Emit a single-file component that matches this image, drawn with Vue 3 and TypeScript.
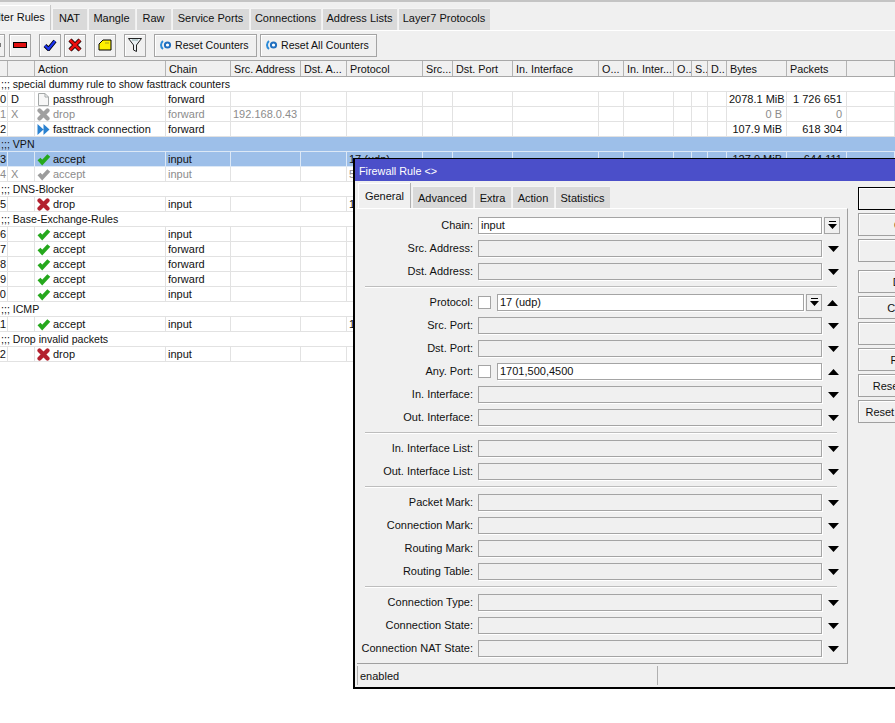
<script setup lang="ts">
type Row = {
  comment?: string;
  num?: string;
  flag?: string;
  icon?: string;
  action?: string;
  chain?: string;
  src?: string;
  proto?: string;
  bytes?: string;
  packets?: string;
  off?: boolean;
  sel?: boolean;
};

const tabs = ['NAT', 'Mangle', 'Raw', 'Service Ports', 'Connections', 'Address Lists', 'Layer7 Protocols'];
const tabWidths = [35, 47, 35, 77, 71, 75, 92];

const headers = ['', '', 'Action', 'Chain', 'Src. Address', 'Dst. A...', 'Protocol', 'Src...', 'Dst. Port', 'In. Interface', 'O...', 'In. Inter...', 'O..', 'S..', 'D..', 'Bytes', 'Packets', ''];

const rows: Row[] = [
  { comment: ';;; special dummy rule to show fasttrack counters' },
  { num: '0', flag: 'D', icon: 'page', action: 'passthrough', chain: 'forward', bytes: '2078.1 MiB', packets: '1 726 651' },
  { num: '1', flag: 'X', icon: 'x-off', action: 'drop', chain: 'forward', src: '192.168.0.43', bytes: '0 B', packets: '0', off: true },
  { num: '2', icon: 'fast', action: 'fasttrack connection', chain: 'forward', bytes: '107.9 MiB', packets: '618 304' },
  { comment: ';;; VPN', sel: true },
  { num: '3', icon: 'check', action: 'accept', chain: 'input', proto: '17 (udp)', bytes: '127.9 MiB', packets: '644 111', sel: true },
  { num: '4', flag: 'X', icon: 'check-off', action: 'accept', chain: 'input', proto: '50 (ipsec-esp)', off: true },
  { comment: ';;; DNS-Blocker' },
  { num: '5', icon: 'x', action: 'drop', chain: 'input', proto: '17 (udp)' },
  { comment: ';;; Base-Exchange-Rules' },
  { num: '6', icon: 'check', action: 'accept', chain: 'input' },
  { num: '7', icon: 'check', action: 'accept', chain: 'forward' },
  { num: '8', icon: 'check', action: 'accept', chain: 'forward' },
  { num: '9', icon: 'check', action: 'accept', chain: 'forward' },
  { num: '10', icon: 'check', action: 'accept', chain: 'input' },
  { comment: ';;; ICMP' },
  { num: '11', icon: 'check', action: 'accept', chain: 'input', proto: '1 (icmp)' },
  { comment: ';;; Drop invalid packets' },
  { num: '12', icon: 'x', action: 'drop', chain: 'input' },
];

const dlgTabs = [
  { name: 'Advanced', w: 61 },
  { name: 'Extra', w: 37 },
  { name: 'Action', w: 42 },
  { name: 'Statistics', w: 55 },
];

type Field = { label: string; value?: string; check?: boolean; drop?: boolean; up?: boolean };

const groups: Field[][] = [
  [
    { label: 'Chain', value: 'input', drop: true },
    { label: 'Src. Address' },
    { label: 'Dst. Address' },
  ],
  [
    { label: 'Protocol', value: '17 (udp)', check: true, drop: true, up: true },
    { label: 'Src. Port' },
    { label: 'Dst. Port' },
    { label: 'Any. Port', value: '1701,500,4500', check: true, up: true },
    { label: 'In. Interface' },
    { label: 'Out. Interface' },
  ],
  [{ label: 'In. Interface List' }, { label: 'Out. Interface List' }],
  [{ label: 'Packet Mark' }, { label: 'Connection Mark' }, { label: 'Routing Mark' }, { label: 'Routing Table' }],
  [{ label: 'Connection Type' }, { label: 'Connection State' }, { label: 'Connection NAT State' }],
];

const buttons = ['OK', 'Cancel', 'Apply', 'Disable', 'Comment', 'Copy', 'Remove', 'Reset Counters', 'Reset All Counters'];
</script>

<template>
  <div class="page">
    <svg class="defs" width="0" height="0">
      <symbol id="check" viewBox="0 0 14 13"><path d="M2 6 5.2 9.5 11.8 2.5" fill="none" stroke="#25a81c" stroke-width="4" /></symbol>
      <symbol id="check-off" viewBox="0 0 14 13"><path d="M2 6 5.2 9.5 11.8 2.5" fill="none" stroke="#9c9c9c" stroke-width="4" /></symbol>
      <symbol id="x" viewBox="0 0 14 13"><path d="M2.5 2.5 10.5 10.5M10.5 2.5 2.5 10.5" fill="none" stroke="#b3202e" stroke-width="4.2" stroke-linecap="round" /></symbol>
      <symbol id="x-off" viewBox="0 0 14 13"><path d="M2.5 2.5 10.5 10.5M10.5 2.5 2.5 10.5" fill="none" stroke="#a0a0a0" stroke-width="4.2" stroke-linecap="round" /></symbol>
      <symbol id="page" viewBox="0 0 14 13"><path d="M1.5.5H8L11.5 4V12.5H1.5ZM8 .5V4H11.5" fill="#f7f7f7" stroke="#a4a8a8" /></symbol>
      <symbol id="fast" viewBox="0 0 14 13"><path d="M.5 1 6.5 6.5 .5 12ZM6.5 1 12.5 6.5 6.5 12Z" fill="#2b82d0" /></symbol>
    </svg>

    <div class="tabs">
      <div class="tab active">Filter Rules</div>
      <div v-for="(t, i) in tabs" :key="t" class="tab" :style="{ width: tabWidths[i] + 'px' }">{{ t }}</div>
    </div>

    <div class="toolbar">
      <button class="tool">
        <svg width="14" height="14" viewBox="0 0 14 14"><path d="M5 1H9V5H13V9H9V13H5V9H1V5H5Z" fill="#1f2ad0" stroke="#000" /></svg>
      </button>
      <button class="tool">
        <svg width="14" height="6" viewBox="0 0 14 6"><rect x=".5" y=".5" width="13" height="5" fill="#e01010" stroke="#000" /></svg>
      </button>
      <button class="tool sep">
        <svg width="14" height="12" viewBox="0 0 14 12"><path d="M2 6.5 5.5 10 12 2" fill="none" stroke="#000" stroke-width="4" /><path d="M2 6.5 5.5 10 12 2" fill="none" stroke="#1c34f0" stroke-width="2.4" /></svg>
      </button>
      <button class="tool">
        <svg width="14" height="14" viewBox="0 0 14 14"><path d="M2 2 12 12M12 2 2 12" fill="none" stroke="#000" stroke-width="4.4" /><path d="M2 2 12 12M12 2 2 12" fill="none" stroke="#ec1010" stroke-width="2.8" /></svg>
      </button>
      <button class="tool sep">
        <svg width="14" height="12" viewBox="0 0 14 12"><path d="M1 5 5 1H13V11H1Z" fill="#fdf000" stroke="#000" /><path d="M7 4H11" stroke="#a8a020" /></svg>
      </button>
      <button class="tool sep">
        <svg width="16" height="16" viewBox="0 0 16 16"><path d="M1.5 1.5H14.5L9.5 8V14.5L6.5 13V8Z" fill="#e8eef2" stroke="#222" /><path d="M5 3H11" stroke="#8aa" /></svg>
      </button>
      <button class="tool text sep">
        <svg width="12" height="10" viewBox="0 0 12 10"><circle cx="7.5" cy="5" r="2.6" fill="#fff" stroke="#1f6fc0" stroke-width="2" /><path d="M3 1A5 5 0 0 0 3 9" fill="none" stroke="#2a8ad8" stroke-width="2" /></svg>
        Reset Counters
      </button>
      <button class="tool text all">
        <svg width="12" height="10" viewBox="0 0 12 10"><circle cx="7.5" cy="5" r="2.6" fill="#fff" stroke="#1f6fc0" stroke-width="2" /><path d="M3 1A5 5 0 0 0 3 9" fill="none" stroke="#2a8ad8" stroke-width="2" /></svg>
        Reset All Counters
      </button>
    </div>

    <div class="table">
      <div class="row head">
        <div v-for="(h, i) in headers" :key="i" class="cell">{{ h }}</div>
      </div>
      <template v-for="(r, i) in rows" :key="i">
        <div v-if="r.comment" class="row comment" :class="{ sel: r.sel }">{{ r.comment }}</div>
        <div v-else class="row" :class="{ sel: r.sel, off: r.off }">
          <div class="cell num">{{ r.num }}</div>
          <div class="cell flag">{{ r.flag }}</div>
          <div class="cell act">
            <svg class="ico" width="14" height="13"><use :href="'#' + r.icon" /></svg>{{ r.action }}
          </div>
          <div class="cell">{{ r.chain }}</div>
          <div class="cell">{{ r.src }}</div>
          <div class="cell"></div>
          <div class="cell">{{ r.proto }}</div>
          <div v-for="n in 8" :key="n" class="cell"></div>
          <div class="cell right">{{ r.bytes }}</div>
          <div class="cell right">{{ r.packets }}</div>
          <div class="cell"></div>
        </div>
      </template>
    </div>

    <div class="dialog">
      <div class="title">Firewall Rule &lt;&gt;</div>
      <div class="dlg-body">
        <div class="dlg-main">
          <div class="dlg-tabs">
            <div class="dlg-tab active">General</div>
            <div v-for="t in dlgTabs" :key="t.name" class="dlg-tab" :style="{ width: t.w + 'px' }">{{ t.name }}</div>
          </div>
          <div class="panel">
            <template v-for="(g, gi) in groups" :key="gi">
              <div v-if="gi > 0" class="hr"></div>
              <div v-for="f in g" :key="f.label" class="field">
                <div class="label">{{ f.label }}:</div>
                <div v-if="f.check" class="checkbox"></div>
                <div class="input" :class="{ filled: f.value }">{{ f.value }}</div>
                <div v-if="f.drop && f.value" class="drop-btn">
                  <svg width="9" height="9" viewBox="0 0 9 9"><path d="M1 0H8V1H1ZM0 3H9L4.5 8Z" fill="#000" /></svg>
                </div>
                <svg v-if="f.up" class="arrow" :class="{ tight: f.drop }" width="11" height="6" viewBox="0 0 11 6"><path d="M0 6 5.5 0 11 6Z" fill="#000" /></svg>
                <svg v-else-if="!f.value" class="arrow" width="11" height="6" viewBox="0 0 11 6"><path d="M0 0H11L5.5 6Z" fill="#000" /></svg>
              </div>
            </template>
          </div>
          <div class="status">
            <div class="st first">enabled</div>
            <div class="st"></div>
          </div>
        </div>
        <div class="dlg-buttons">
          <button v-for="b in buttons" :key="b" class="dlg-btn" :class="{ def: b === 'OK', gap: b === 'Disable' }">{{ b }}</button>
        </div>
      </div>
    </div>
  </div>
</template>

<style>
html, body {
  margin: 0;
  background: #fff;
  overflow: hidden;
}
</style>

<style scoped>
.page {
  position: relative;
  width: 895px;
  height: 723px;
  overflow: hidden;
  background: #fff;
  color: #111;
  font: 11px/14px "Liberation Sans", Arial, sans-serif;
  border-top: 2px solid #c4c4c4;
  box-sizing: border-box;
}
.defs { position: absolute; }

.tabs {
  display: flex;
  align-items: flex-end;
  gap: 1px;
  height: 28px;
  margin-left: -17px;
  background: #f0f0f0;
  border-bottom: 1px solid #fff;
  box-sizing: content-box;
}
.tab {
  height: 22px;
  line-height: 21px;
  text-align: center;
  background: #d9d9d9;
  box-shadow: inset 1px 1px 0 #f4f4f4;
  white-space: nowrap;
}
.tab.active {
  width: 68px;
  height: 25px;
  line-height: 25px;
  background: #f0f0f0;
  box-shadow: inset -1px 0 0 #c8c8c8, inset 0 1px 0 #fff;
}

.toolbar {
  display: flex;
  align-items: center;
  height: 29px;
  margin-left: -17px;
  padding-bottom: 1px;
  gap: 3px;
  background: #f0f0f0;
  box-sizing: border-box;
}
.tool {
  display: flex;
  align-items: center;
  justify-content: center;
  width: 22px;
  height: 23px;
  padding: 0;
  background: #f0f0f0;
  border: 1px solid #a4a4a4;
  box-shadow: inset 1px 1px 0 #fff;
  color: #111;
  font: inherit;
  flex-shrink: 0;
  white-space: nowrap;
}
.tool.sep { margin-left: 5px; }
.tool:first-child { margin-right: 1px; }
.tool.text { width: 103px; gap: 3px; justify-content: flex-start; padding-left: 5px; font-size: 10.6px; }
.tool.text.all { width: 117px; margin-left: 0; }

.table { margin-left: -30px; }
.row {
  display: grid;
  grid-template-columns: 38px 27px 131px 65px 70px 46px 76px 30px 60px 86px 25px 50px 18px 16px 19px 60px 60px 48px;
  height: 15px;
  box-sizing: border-box;
  border-bottom: 1px solid #e2e2e2;
  white-space: nowrap;
}
.row.head {
  height: 17px;
  background: #f0f0f0;
  border-top: 1px solid #a8a8a8;
  border-bottom: 1px solid #a8a8a8;
  font-size: 10.8px;
}
.head .cell {
  border-right: 1px solid #b4b4b4;
  line-height: 16px;
  padding-left: 3px;
}
.cell {
  box-sizing: border-box;
  overflow: hidden;
  border-right: 1px solid #e2e2e2;
  padding: 0 3px 0 2px;
  line-height: 15px;
}
.row.comment {
  display: block;
  padding-left: 31px;
  line-height: 15px;
  font-size: 10.6px;
}
.row.sel { background: #9dbfe9; border-bottom-color: #dce8f6; }
.row.sel .cell { border-right-color: #dce8f6; }
.row.off { color: #8c8c8c; }
.cell.num { text-align: right; padding-right: 1px; }
.cell.flag { padding-left: 3px; }
.cell.act { display: flex; align-items: center; padding-left: 2px; }
.ico { margin-right: 2px; flex-shrink: 0; }
.right { text-align: right; padding-right: 4px; }

.dialog {
  position: absolute;
  left: 353px;
  top: 156px;
  width: 620px;
  height: 531px;
  box-sizing: border-box;
  background: #f0f0f0;
  border: 1px solid #000;
  border-left-width: 2px;
  border-bottom-width: 2px;
  display: flex;
  flex-direction: column;
}
.title {
  height: 22px;
  line-height: 24px;
  padding-left: 4px;
  background: #4b4fc9;
  color: #fff;
  font-size: 10.8px;
  flex-shrink: 0;
}
.dlg-body { display: flex; flex: 1; }
.dlg-main { width: 493px; padding-left: 2px; box-sizing: border-box; }
.dlg-tabs {
  display: flex;
  align-items: flex-end;
  gap: 1px;
  height: 27px;
  padding-left: 1px;
}
.dlg-tab {
  height: 22px;
  line-height: 24px;
  text-align: center;
  background: #d9d9d9;
  box-shadow: inset 1px 1px 0 #f4f4f4;
}
.dlg-tab.active {
  width: 53px;
  height: 25px;
  line-height: 26px;
  background: #f0f0f0;
  box-shadow: inset -1px 0 0 #b0b0b0, inset 1px 1px 0 #fff;
}
.panel {
  height: 456px;
  box-sizing: border-box;
  padding: 8px 0 0 0;
  border-top: 1px solid #fff;
  border-right: 1px solid #a0a0a0;
  border-bottom: 1px solid #a0a0a0;
  display: flex;
  flex-direction: column;
  gap: 6px;
}
.field {
  display: flex;
  align-items: center;
  height: 17px;
}
.label {
  width: 116px;
  margin-right: 5px;
  padding-bottom: 2px;
  text-align: right;
  white-space: nowrap;
  flex-shrink: 0;
}
.input {
  flex: 0 0 344px;
  box-sizing: border-box;
  height: 17px;
  line-height: 15px;
  padding-left: 2px;
  border: 1px solid #a4a4a4;
  box-shadow: 1px 1px 0 #fff;
}
.input.filled { background: #fff; }
.checkbox {
  box-sizing: border-box;
  width: 13px;
  height: 13px;
  margin-right: 6px;
  background: #fff;
  border: 1px solid #a4a4a4;
  flex-shrink: 0;
}
.checkbox + .input { flex-basis: 325px; }
.checkbox + .input:has(+ .drop-btn) { flex-basis: 307px; }
.drop-btn {
  display: flex;
  align-items: center;
  justify-content: center;
  box-sizing: border-box;
  width: 16px;
  height: 17px;
  margin-left: 2px;
  border: 1px solid #a4a4a4;
  flex-shrink: 0;
}
.arrow { margin-left: 6px; flex-shrink: 0; }
.arrow.tight { margin-left: 5px; }
.hr {
  height: 2px;
  margin-right: 10px;
  margin-left: 8px;
  background: linear-gradient(#bdbdbd 50%, #fff 50%);
  flex-shrink: 0;
}
.status {
  display: flex;
  gap: 2px;
  margin-top: 2px;
  height: 19px;
}
.st {
  flex: 1;
  box-shadow: inset 1px 0 0 #b0b0b0;
  line-height: 20px;
  padding-left: 3px;
}
.st.first { flex: 0 0 298px; box-sizing: border-box; }
.dlg-buttons {
  display: flex;
  flex-direction: column;
  gap: 3px;
  padding: 6px 0 0 10px;
}
.dlg-btn {
  width: 106px;
  height: 23px;
  padding: 0;
  background: #f0f0f0;
  border: 1px solid #a0a0a0;
  box-shadow: inset 1px 1px 0 #fff;
  color: #111;
  font: inherit;
  white-space: nowrap;
}
.dlg-btn.def { border-color: #000; }
.dlg-btn.gap { margin-top: 5px; }
</style>
